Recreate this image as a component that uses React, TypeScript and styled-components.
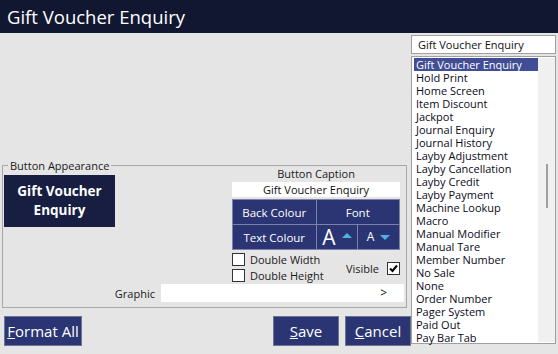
import React from 'react';
import styled, { createGlobalStyle } from 'styled-components';

const GlobalStyle = createGlobalStyle`
  html, body {
    margin: 0;
    padding: 0;
    background: #e5e5e5;
  }
  body {
    font-family: "Open Sans", "Noto Sans", sans-serif;
  }
`;

const listItems = [
  'Gift Voucher Enquiry',
  'Hold Print',
  'Home Screen',
  'Item Discount',
  'Jackpot',
  'Journal Enquiry',
  'Journal History',
  'Layby Adjustment',
  'Layby Cancellation',
  'Layby Credit',
  'Layby Payment',
  'Machine Lookup',
  'Macro',
  'Manual Modifier',
  'Manual Tare',
  'Member Number',
  'No Sale',
  'None',
  'Order Number',
  'Pager System',
  'Paid Out',
  'Pay Bar Tab',
];

const App = () => {
  return (
    <>
      <GlobalStyle />
      <Window>
        <TitleBar>Gift Voucher Enquiry</TitleBar>
        <Body>
          <LeftPane>
            <GroupBox>
              <Legend>Button Appearance</Legend>
              <TopRow>
                <PreviewButton>Gift Voucher<br />Enquiry</PreviewButton>
                <CaptionColumn>
                  <CaptionLabel>Button Caption</CaptionLabel>
                  <CaptionInput>Gift Voucher Enquiry</CaptionInput>
                  <StyleGrid>
                    <GridCell $span={2}>Back Colour</GridCell>
                    <GridCell $span={2}>Font</GridCell>
                    <GridCell $span={2}>Text Colour</GridCell>
                    <GridCell $span={1}>
                      <BigA>A</BigA>
                      <Arrow $up />
                    </GridCell>
                    <GridCell $span={1}>
                      <SmallA>A</SmallA>
                      <Arrow />
                    </GridCell>
                  </StyleGrid>
                  <CheckArea>
                    <CheckColumn>
                      <CheckRow>
                        <CheckBox />
                        <CheckLabel>Double Width</CheckLabel>
                      </CheckRow>
                      <CheckRow>
                        <CheckBox />
                        <CheckLabel>Double Height</CheckLabel>
                      </CheckRow>
                    </CheckColumn>
                    <VisibleRow>
                      <CheckLabel>Visible</CheckLabel>
                      <CheckBox>
                        <svg width="9" height="9" viewBox="0 0 9 9">
                          <path d="M1 4.5 L3.5 7 L8 1.5" stroke="#000" strokeWidth="2" fill="none" />
                        </svg>
                      </CheckBox>
                    </VisibleRow>
                  </CheckArea>
                </CaptionColumn>
              </TopRow>
              <GraphicRow>
                <GraphicLabel>Graphic</GraphicLabel>
                <GraphicInput>&gt;</GraphicInput>
              </GraphicRow>
            </GroupBox>
            <ButtonRow>
              <ActionButton $width={78}><u>F</u>ormat All</ActionButton>
              <Spacer />
              <ActionButton $width={66}><u>S</u>ave</ActionButton>
              <ActionButton $width={66}><u>C</u>ancel</ActionButton>
            </ButtonRow>
          </LeftPane>
          <RightPane>
            <Dropdown>Gift Voucher Enquiry</Dropdown>
            <ListBox>
              <ListItems>
                {listItems.map((item, i) => (
                  <ListItem key={item} $selected={i === 0}>{item}</ListItem>
                ))}
              </ListItems>
              <ScrollTrack>
                <ScrollThumb />
              </ScrollTrack>
            </ListBox>
          </RightPane>
        </Body>
      </Window>
    </>
  );
};

export default App;

const Window = styled.div`
  width: 558px;
  height: 354px;
  display: flex;
  flex-direction: column;
  overflow: hidden;
  background: #e5e5e5;
`;

const TitleBar = styled.div`
  height: 33px;
  flex-shrink: 0;
  background: #111731;
  color: #ffffff;
  font-size: 18.5px;
  line-height: 33px;
  padding-left: 7px;
`;

const Body = styled.div`
  flex: 1;
  display: flex;
`;

const LeftPane = styled.div`
  width: 411px;
  display: flex;
  flex-direction: column;
  justify-content: flex-end;
  padding-bottom: 8px;
  box-sizing: border-box;
`;

const GroupBox = styled.div`
  position: relative;
  margin: 0 4px 8px 2px;
  border: 1px solid #a8a8a8;
  padding: 2px 2px 5px 0;
`;

const Legend = styled.span`
  position: absolute;
  top: -7px;
  left: 5px;
  padding: 0 2px;
  background: #e5e5e5;
  font-size: 11px;
  line-height: 14px;
  color: #1a1a1a;
`;

const TopRow = styled.div`
  display: flex;
  justify-content: space-between;
`;

const PreviewButton = styled.div`
  width: 111px;
  height: 52px;
  margin: 7px 0 0 1px;
  background: #171e42;
  color: #ffffff;
  font-weight: 700;
  font-size: 13.5px;
  line-height: 19px;
  text-align: center;
  display: flex;
  align-items: center;
  justify-content: center;
`;

const CaptionColumn = styled.div`
  width: 168px;
  margin-right: 4px;
  display: flex;
  flex-direction: column;
`;

const CaptionLabel = styled.div`
  font-size: 11px;
  line-height: 12px;
  text-align: center;
  color: #1a1a1a;
`;

const CaptionInput = styled.div`
  margin-top: 2px;
  height: 15px;
  background: #ffffff;
  font-size: 11px;
  line-height: 15px;
  text-align: center;
  color: #111;
`;

const StyleGrid = styled.div`
  margin-top: 2px;
  display: grid;
  grid-template-columns: repeat(4, 1fr);
  grid-template-rows: 24px 24px;
  border: 1px solid #7d83a8;
  background: #7d83a8;
  gap: 1px;
`;

const GridCell = styled.div<{ $span: number }>`
  grid-column: span ${(p) => p.$span};
  background: #2b3573;
  color: #ffffff;
  font-size: 11.5px;
  display: flex;
  align-items: center;
  justify-content: center;
  gap: 6px;
`;

const BigA = styled.span`
  font-size: 21px;
  line-height: 1;
`;

const SmallA = styled.span`
  font-size: 12px;
  line-height: 1;
`;

const Arrow = styled.span<{ $up?: boolean }>`
  width: 0;
  height: 0;
  border-left: 5px solid transparent;
  border-right: 5px solid transparent;
  ${(p) =>
    p.$up
      ? 'border-bottom: 5px solid #4fb2e6; margin-top: -3px;'
      : 'border-top: 5px solid #4fb2e6; margin-top: 1px;'}
`;

const CheckArea = styled.div`
  margin-top: 2px;
  display: flex;
  align-items: center;
  justify-content: space-between;
`;

const CheckColumn = styled.div`
  display: flex;
  flex-direction: column;
  gap: 2px;
`;

const CheckRow = styled.div`
  display: flex;
  align-items: center;
  gap: 5px;
  height: 14px;
`;

const VisibleRow = styled.div`
  display: flex;
  align-items: center;
  gap: 8px;
  margin-top: 2px;
`;

const CheckBox = styled.div`
  width: 11px;
  height: 11px;
  border: 1px solid #333333;
  background: #ffffff;
  display: flex;
  align-items: center;
  justify-content: center;
`;

const CheckLabel = styled.span`
  font-size: 11px;
  line-height: 13px;
  color: #1a1a1a;
`;

const GraphicRow = styled.div`
  margin-top: 2px;
  display: flex;
  align-items: center;
`;

const GraphicLabel = styled.span`
  width: 152px;
  text-align: right;
  font-size: 11px;
  color: #1a1a1a;
`;

const GraphicInput = styled.div`
  margin-left: 6px;
  flex: 1;
  height: 18px;
  background: #ffffff;
  font-size: 12px;
  line-height: 18px;
  text-align: right;
  padding-right: 17px;
  color: #111;
`;

const ButtonRow = styled.div`
  display: flex;
  gap: 6px;
  padding-left: 4px;
`;

const Spacer = styled.div`
  flex: 1;
`;

const ActionButton = styled.div<{ $width: number }>`
  width: ${(p) => p.$width}px;
  height: 30px;
  box-sizing: border-box;
  background: #2b3573;
  border: 1px solid #6e7390;
  color: #ffffff;
  font-size: 15px;
  display: flex;
  align-items: center;
  justify-content: center;
`;

const RightPane = styled.div`
  width: 145px;
  padding-top: 2px;
  display: flex;
  flex-direction: column;
  gap: 2px;
`;

const Dropdown = styled.div`
  height: 19px;
  box-sizing: border-box;
  background: #ffffff;
  border: 1px solid #a0a0a0;
  font-size: 11px;
  line-height: 17px;
  padding-left: 6px;
  color: #111;
`;

const ListBox = styled.div`
  height: 288px;
  box-sizing: border-box;
  border: 1px solid #a0a0a0;
  background: #ffffff;
  display: flex;
  padding: 1px 0 1px 2px;
`;

const ListItems = styled.div`
  flex: 1;
  display: flex;
  flex-direction: column;
`;

const ListItem = styled.div<{ $selected?: boolean }>`
  height: 13px;
  font-size: 11px;
  line-height: 13px;
  padding-left: 2px;
  white-space: nowrap;
  background: ${(p) => (p.$selected ? '#414d94' : 'transparent')};
  color: ${(p) => (p.$selected ? '#ffffff' : '#0a0a1a')};
`;

const ScrollTrack = styled.div`
  width: 17px;
  background: #f0f0f0;
  display: flex;
  justify-content: center;
  padding-top: 106px;
  box-sizing: border-box;
`;

const ScrollThumb = styled.div`
  width: 2px;
  height: 44px;
  background: #a0a0a0;
`;
